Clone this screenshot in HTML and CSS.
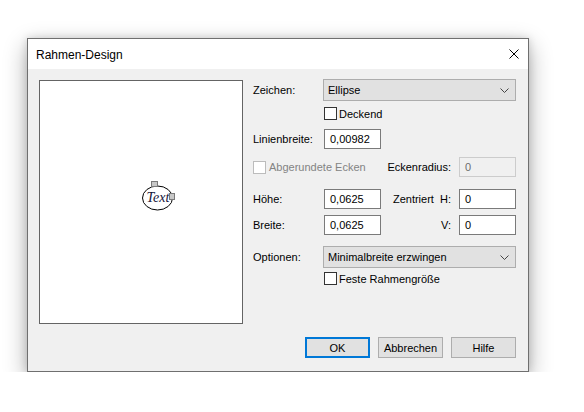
FILE: index.html
```html
<!DOCTYPE html>
<html lang="de">
<head>
<meta charset="utf-8">
<title>Rahmen-Design</title>
<link rel="stylesheet" href="styles.css">
</head>
<body>
<div class="dialog">
  <div class="titlebar">
    <span class="title">Rahmen-Design</span>
    <svg class="close" width="10" height="10" viewBox="0 0 10 10"><path d="M0.5 0.5 L9.5 9.5 M9.5 0.5 L0.5 9.5" stroke="#000" stroke-width="1" fill="none"/></svg>
  </div>
  <div class="body">
    <div class="main">
      <div class="preview">
        <svg class="canvas" width="202" height="242" viewBox="0 0 202 242">
          <ellipse cx="117.5" cy="117" rx="15" ry="12" fill="none" stroke="#000" stroke-width="1"/>
          <text x="106.5" y="121" class="ptext">Text</text>
          <rect x="111.5" y="100.5" width="6" height="5" fill="#c8c8c8" stroke="#7a7a7a" stroke-width="1"/>
          <rect x="129.5" y="112.5" width="5" height="6" fill="#c8c8c8" stroke="#7a7a7a" stroke-width="1"/>
        </svg>
      </div>
      <div class="form">
        <div class="row r1">
          <span class="lbl">Zeichen:</span>
          <div class="select"><span>Ellipse</span><svg class="chev" width="9" height="5" viewBox="0 0 9 5"><path d="M0.5 0.5 L4.5 4.5 L8.5 0.5" stroke="#444" fill="none"/></svg></div>
        </div>
        <div class="row r2">
          <span class="lbl"></span>
          <span class="check"><span class="box"></span>Deckend</span>
        </div>
        <div class="row r3">
          <span class="lbl">Linienbreite:</span>
          <div class="input">0,00982</div>
        </div>
        <div class="row r4">
          <span class="check disabled"><span class="box"></span>Abgerundete Ecken</span>
          <span class="rlbl">Eckenradius:</span>
          <div class="input disabled">0</div>
        </div>
        <div class="row r5">
          <span class="lbl">Höhe:</span>
          <div class="input">0,0625</div>
          <span class="rlbl">Zentriert&nbsp; H:</span>
          <div class="input">0</div>
        </div>
        <div class="row r6">
          <span class="lbl">Breite:</span>
          <div class="input">0,0625</div>
          <span class="rlbl">V:</span>
          <div class="input">0</div>
        </div>
        <div class="row r7">
          <span class="lbl">Optionen:</span>
          <div class="select"><span>Minimalbreite erzwingen</span><svg class="chev" width="9" height="5" viewBox="0 0 9 5"><path d="M0.5 0.5 L4.5 4.5 L8.5 0.5" stroke="#444" fill="none"/></svg></div>
        </div>
        <div class="row r8">
          <span class="lbl"></span>
          <span class="check"><span class="box"></span>Feste Rahmengröße</span>
        </div>
      </div>
    </div>
    <div class="footer">
      <div class="btn default">OK</div>
      <div class="btn">Abbrechen</div>
      <div class="btn">Hilfe</div>
    </div>
  </div>
</div>
</body>
</html>
```

FILE: styles.css
```css
html, body {
  margin: 0;
  padding: 0;
  background: #ffffff;
}
body {
  padding: 38px 0 0 27px;
  font-family: "Liberation Sans", Arial, sans-serif;
  font-size: 11px;
  color: #000;
}
.dialog {
  box-sizing: border-box;
  width: 502px;
  height: 334px;
  border: 1px solid #6f6f6f;
  background: #f0f0f0;
  box-shadow: 0 8px 22px rgba(0, 0, 0, 0.32), 0 0 8px rgba(0, 0, 0, 0.14);
  display: flex;
  flex-direction: column;
}
.titlebar {
  height: 30px;
  background: #ffffff;
  display: flex;
  align-items: center;
  padding: 0 9px 0 8px;
}
.title {
  font-size: 12px;
  flex: 1;
  padding-top: 1px;
}
.close {
  display: block;
}
.body {
  flex: 1;
  display: flex;
  flex-direction: column;
  padding: 10px 12px 0 11px;
}
.main {
  display: flex;
  gap: 10px;
}
.preview {
  box-sizing: border-box;
  width: 204px;
  height: 244px;
  margin-top: 1px;
  border: 1px solid #646464;
  background: #fff;
}
.canvas {
  display: block;
}
.ptext {
  font-family: "Liberation Serif", "Times New Roman", serif;
  font-style: italic;
  font-size: 14px;
  fill: #14143a;
}
.form {
  width: 263px;
  display: flex;
  flex-direction: column;
}
.row {
  display: flex;
  align-items: center;
}
.lbl {
  width: 70px;
  flex: none;
}
.select {
  box-sizing: border-box;
  width: 193px;
  height: 22px;
  border: 1px solid #adadad;
  background: #e1e1e1;
  display: flex;
  align-items: center;
  padding: 0 6px 0 4px;
}
.select span {
  flex: 1;
}
.chev {
  display: block;
}
.input {
  box-sizing: border-box;
  width: 57px;
  height: 20px;
  margin-left: 1px;
  border: 1px solid #7a7a7a;
  background: #fff;
  padding: 0 0 0 5px;
  line-height: 18px;
  flex: none;
}
.input.disabled {
  border-color: #cccccc;
  background: #f0f0f0;
  color: #6d6d6d;
}
.rlbl {
  margin-left: auto;
  margin-right: 7px;
  white-space: pre;
}
.check {
  display: flex;
  align-items: center;
  margin-left: 1px;
}
.box {
  box-sizing: border-box;
  width: 13px;
  height: 13px;
  border: 1px solid #333333;
  background: #fff;
  margin-right: 2px;
}
.check.disabled {
  color: #838383;
  margin-left: 0;
}
.check.disabled .box {
  border-color: #bcbcbc;
  margin-right: 3px;
}
.r1 { height: 22px; }
.r2 { height: 13px; margin-top: 6px; }
.r3 { height: 20px; margin-top: 9px; }
.r4 { height: 20px; margin-top: 8px; }
.r5 { height: 20px; margin-top: 12px; }
.r6 { height: 20px; margin-top: 6px; }
.r7 { height: 22px; margin-top: 11px; }
.r8 { height: 13px; margin-top: 4px; }
.footer {
  display: flex;
  justify-content: flex-end;
  gap: 8px;
  margin-top: 13px;
}
.btn {
  box-sizing: border-box;
  width: 65px;
  height: 21px;
  border: 1px solid #adadad;
  background: #e1e1e1;
  display: flex;
  align-items: center;
  justify-content: center;
}
.btn.default {
  border: 2px solid #0078d7;
}
```
